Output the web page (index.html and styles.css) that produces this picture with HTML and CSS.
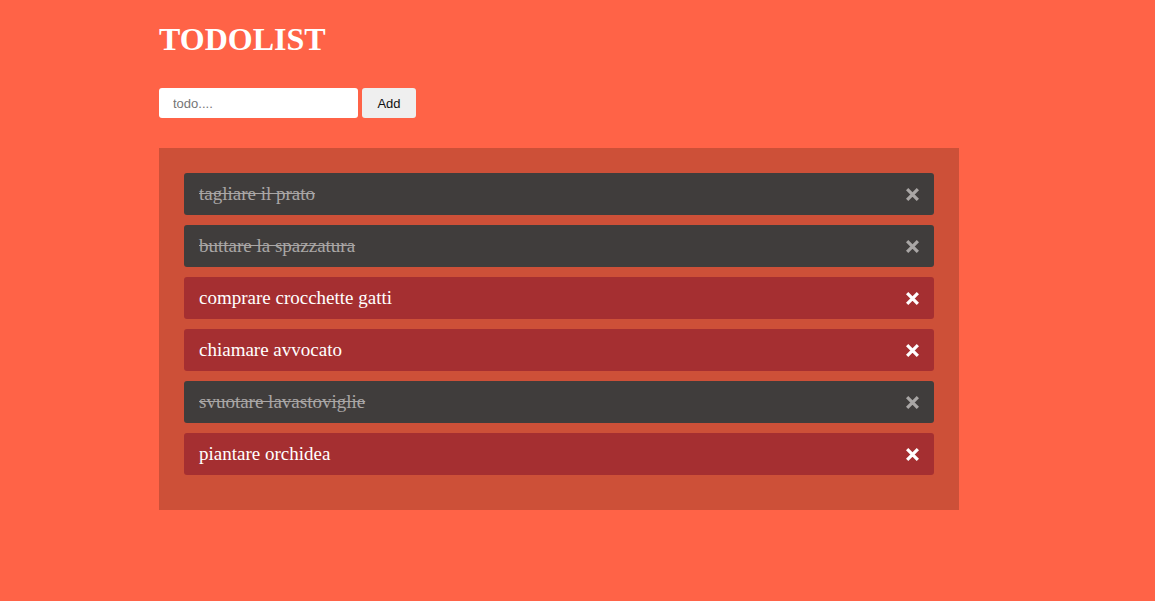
FILE: index.html
```html
<!DOCTYPE html>
<html>
<head>
<meta charset="utf-8">
<link rel="stylesheet" href="styles.css">
</head>
<body>
<div class="app">
  <h1 class="title">TODOLIST</h1>
  <form class="add-form">
    <input class="add-input" type="text" placeholder="todo....">
    <button class="add-btn" type="button">Add</button>
  </form>
  <ul class="list">
    <li class="item done"><span class="text">tagliare il prato</span><svg class="x" viewBox="0 0 14 14"><path d="M2 2L12 12M12 2L2 12"/></svg></li>
    <li class="item done"><span class="text">buttare la spazzatura</span><svg class="x" viewBox="0 0 14 14"><path d="M2 2L12 12M12 2L2 12"/></svg></li>
    <li class="item"><span class="text">comprare crocchette gatti</span><svg class="x" viewBox="0 0 14 14"><path d="M2 2L12 12M12 2L2 12"/></svg></li>
    <li class="item"><span class="text">chiamare avvocato</span><svg class="x" viewBox="0 0 14 14"><path d="M2 2L12 12M12 2L2 12"/></svg></li>
    <li class="item done"><span class="text">svuotare lavastoviglie</span><svg class="x" viewBox="0 0 14 14"><path d="M2 2L12 12M12 2L2 12"/></svg></li>
    <li class="item"><span class="text">piantare orchidea</span><svg class="x" viewBox="0 0 14 14"><path d="M2 2L12 12M12 2L2 12"/></svg></li>
  </ul>
</div>
</body>
</html>
```
FILE: styles.css
```css
html, body {
  margin: 0;
  padding: 0;
  background: #ff6347;
  font-family: "Liberation Serif", "Times New Roman", serif;
}
.app {
  width: 800px;
  margin: 0 0 0 159px;
  padding-top: 21px;
}
.title {
  margin: 0;
  font-size: 32px;
  line-height: 37px;
  font-weight: bold;
  color: #fff;
}
.add-form {
  margin-top: 30px;
  display: flex;
  gap: 4px;
}
.add-input {
  box-sizing: border-box;
  width: 199px;
  height: 30px;
  border: none;
  border-radius: 3px;
  padding: 0 14px;
  font-family: "Liberation Sans", Arial, sans-serif;
  font-size: 13px;
  color: #333;
  background: #fff;
  outline: none;
}
.add-input::placeholder { color: #757575; }
.add-btn {
  box-sizing: border-box;
  width: 54px;
  height: 30px;
  border: none;
  border-radius: 3px;
  background: #efefef;
  font-family: "Liberation Sans", Arial, sans-serif;
  font-size: 13px;
  color: #111;
  padding: 0;
}
.list {
  list-style: none;
  margin: 30px 0 0;
  padding: 25px 25px 25px;
  background: #cd5038;
}
.item {
  height: 42px;
  box-sizing: border-box;
  margin-bottom: 10px;
  border-radius: 3px;
  background: #a52f31;
  color: #fff;
  display: flex;
  align-items: center;
  justify-content: space-between;
  padding: 0 15px;
  font-size: 19px;
}
.item.done {
  background: #403d3c;
  color: #a9a6a5;
}
.item.done .text { text-decoration: line-through; }
.x {
  width: 15px;
  height: 15px;
  fill: none;
  stroke: currentColor;
  stroke-width: 3;
  margin-right: -1px;
}
```
